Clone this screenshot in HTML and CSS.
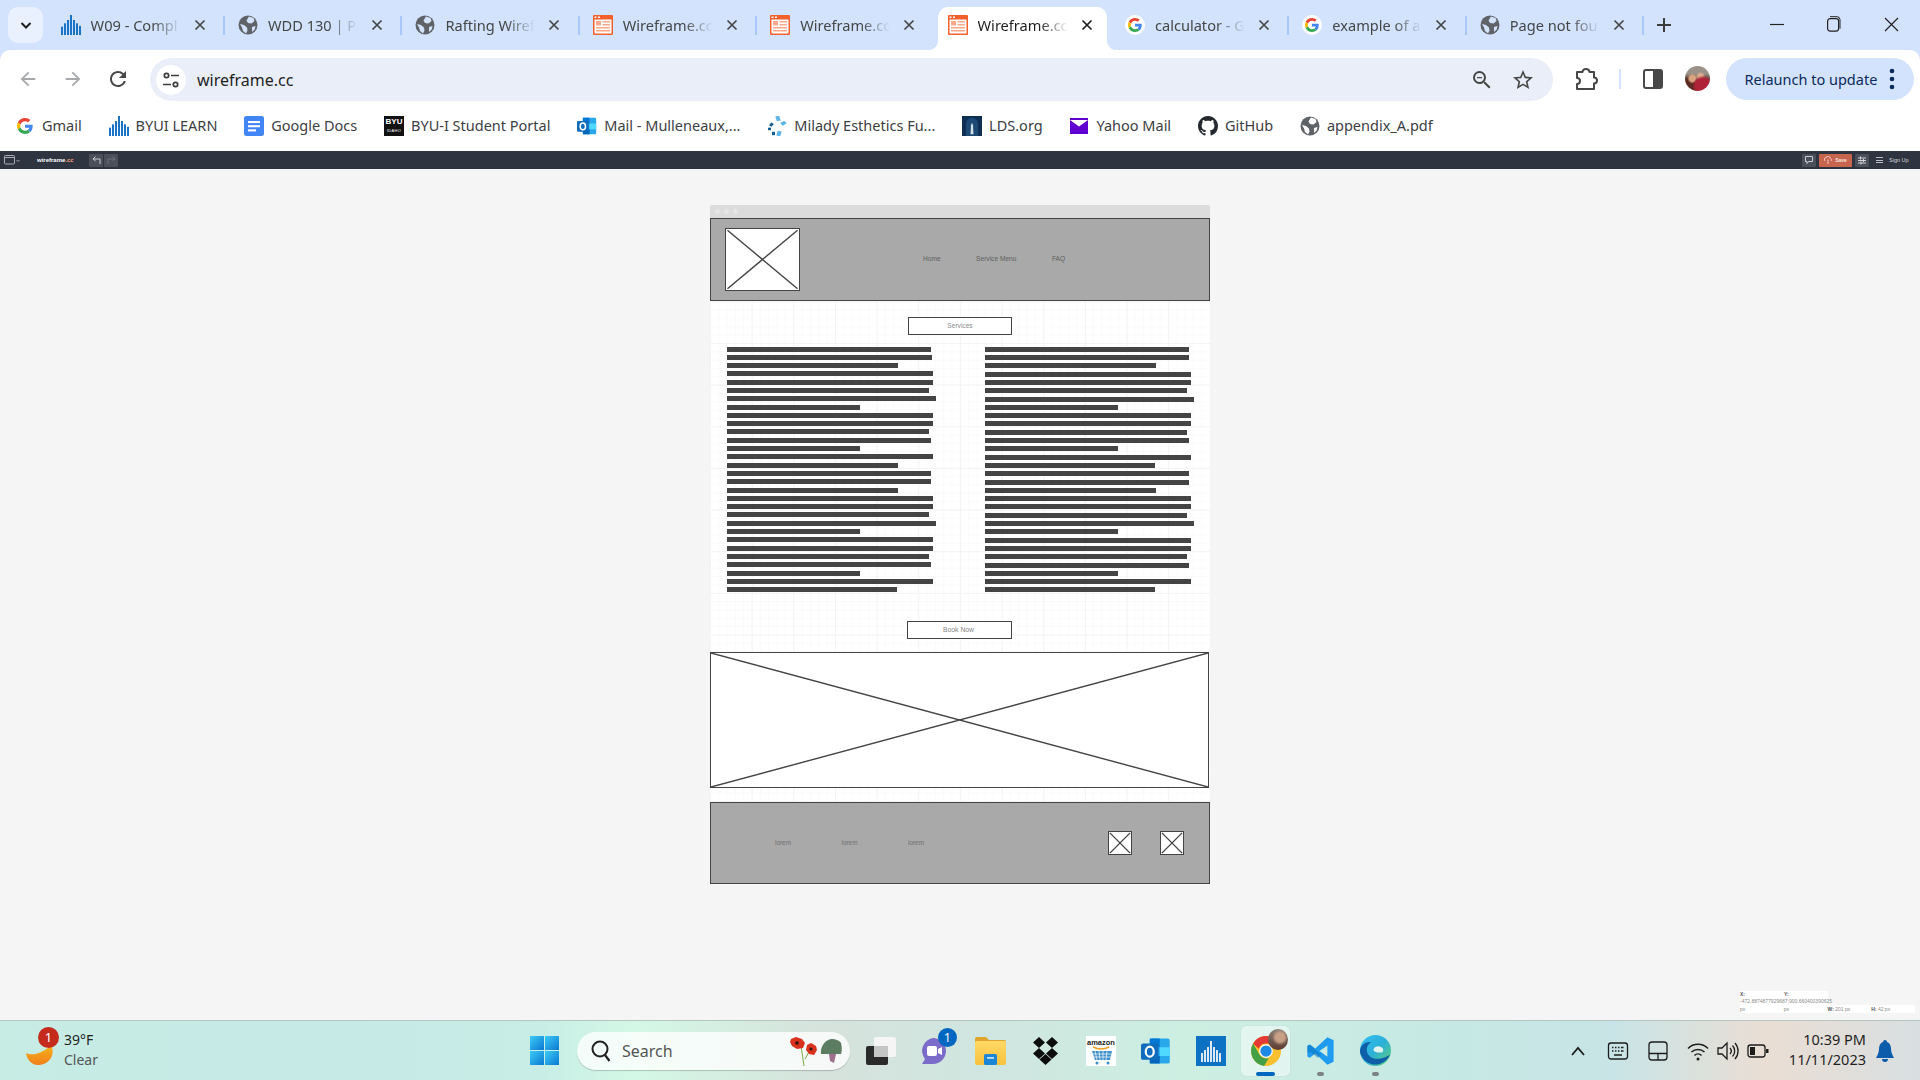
FILE: index.html
```html
<!DOCTYPE html>
<html lang="en">
<head>
  <meta charset="UTF-8">
  <meta name="viewport" content="width=device-width, initial-scale=1.0">
  <title>Wireframe.cc</title>
  <link rel="stylesheet" href="styles.css">
</head>
<body>
  <!-- shared icons -->
  <svg class="sprite" width="0" height="0">
    <defs>
      <linearGradient id="edgeGrad" x1="0" y1="0" x2="1" y2="1">
        <stop offset="0" stop-color="#35c1f1"/><stop offset="0.5" stop-color="#2bb0d8"/><stop offset="1" stop-color="#66d36e"/>
      </linearGradient>
      <linearGradient id="winGrad" x1="0" y1="0" x2="1" y2="1">
        <stop offset="0" stop-color="#3ccbf4"/><stop offset="1" stop-color="#0a78d4"/>
      </linearGradient>
      <linearGradient id="moonGrad" x1="0" y1="0" x2="0" y2="1">
        <stop offset="0" stop-color="#f9b418"/><stop offset="1" stop-color="#ef7f1a"/>
      </linearGradient>
      <linearGradient id="folderGrad" x1="0" y1="0" x2="0" y2="1">
        <stop offset="0" stop-color="#ffd966"/><stop offset="1" stop-color="#f7c23c"/>
      </linearGradient>
    </defs>
    <symbol id="i-globe" viewBox="0 0 20 20">
      <circle cx="10" cy="10" r="9.500" fill="#5f6368"/>
      <path fill="#d3e3fd" d="M11 1.500l4.500 1.500 1 3-3 2.500-3.500-.5-1.500-2.500zM2 9l4 1 3 2.500.5 3-1.500 3L5 16l-1-3.500zM14 12l3.500-1-.8 3.500-2.700 2.500z"/>
    </symbol>
    <symbol id="i-globe-w" viewBox="0 0 20 20">
      <circle cx="10" cy="10" r="9.500" fill="#5f6368"/>
      <path fill="#fff" d="M11 1.500l4.500 1.500 1 3-3 2.500-3.500-.5-1.500-2.500zM2 9l4 1 3 2.500.5 3-1.500 3L5 16l-1-3.500zM14 12l3.500-1-.8 3.500-2.700 2.500z"/>
    </symbol>
    <symbol id="i-wire" viewBox="0 0 20 20">
      <rect width="20" height="20" rx="1" fill="#f4602c"/>
      <rect x="1.500" y="4.500" width="17" height="14" fill="#fff"/>
      <rect x="1.500" y="1.500" width="2" height="1.500" fill="#fff"/>
      <rect x="5" y="1.500" width="2" height="1.500" fill="#fff"/>
      <rect x="3" y="6" width="5" height="4.500" fill="#f9a98a"/>
      <rect x="9.500" y="6" width="7.500" height="1.500" fill="#f9a98a"/>
      <rect x="9.500" y="9" width="7.500" height="1.500" fill="#f9a98a"/>
      <rect x="3" y="12" width="14" height="1.500" fill="#f9a98a"/>
      <rect x="3" y="15" width="14" height="1.500" fill="#f9a98a"/>
    </symbol>
    <symbol id="i-g" viewBox="0 0 48 48">
      <path fill="#EA4335" d="M24 9.500c3.540 0 6.710 1.220 9.210 3.600l6.850-6.850C35.900 2.380 30.470 0 24 0 14.620 0 6.510 5.380 2.560 13.220l7.980 6.190C12.430 13.720 17.740 9.500 24 9.500z"/>
      <path fill="#4285F4" d="M46.980 24.550c0-1.570-.15-3.090-.38-4.550H24v9.020h12.940c-.58 2.960-2.260 5.480-4.780 7.180l7.730 6c4.510-4.180 7.090-10.360 7.090-17.650z"/>
      <path fill="#FBBC05" d="M10.530 28.590c-.48-1.450-.76-2.990-.76-4.590s.27-3.140.76-4.590l-7.980-6.190C.92 16.460 0 20.120 0 24c0 3.880.92 7.540 2.560 10.780l7.970-6.190z"/>
      <path fill="#34A853" d="M24 48c6.480 0 11.930-2.130 15.890-5.810l-7.730-6c-2.150 1.450-4.920 2.300-8.160 2.300-6.260 0-11.570-4.220-13.470-9.910l-7.980 6.190C6.510 42.620 14.620 48 24 48z"/>
    </symbol>
    <symbol id="i-gtab" viewBox="0 0 20 20">
      <circle cx="10" cy="10" r="10" fill="#fff"/>
      <use href="#i-g" x="3" y="3" width="14" height="14"/>
    </symbol>
    <symbol id="i-byui" viewBox="0 0 20 24" preserveAspectRatio="none">
      <g fill="#1a73c4">
        <rect x="0" y="14" width="2" height="10"/><rect x="3" y="10" width="2" height="14"/>
        <rect x="6" y="6" width="2" height="18"/><rect x="9" y="0" width="2" height="24"/>
        <rect x="12" y="6" width="2" height="18"/><rect x="15" y="10" width="2" height="14"/>
        <rect x="18" y="13" width="2" height="11"/>
      </g>
    </symbol>
    <symbol id="i-docs" viewBox="0 0 20 24" preserveAspectRatio="none">
      <rect width="20" height="24" rx="2.500" fill="#4285f4"/>
      <rect x="4" y="6" width="12" height="2.500" fill="#fff"/>
      <rect x="4" y="11" width="12" height="2.500" fill="#fff"/>
      <rect x="4" y="16" width="8" height="2.500" fill="#fff"/>
    </symbol>
    <symbol id="i-outlook" viewBox="0 0 24 24">
      <rect x="7" y="2" width="16" height="20" rx="1.500" fill="#28a8ea"/>
      <rect x="7" y="2" width="8" height="7" fill="#0078d4"/>
      <rect x="15" y="9" width="8" height="7" fill="#50d9ff"/>
      <rect x="7" y="16" width="8" height="6" fill="#0364b8"/>
      <rect x="0" y="6" width="14" height="13" rx="1.500" fill="#0f6cbd"/>
      <ellipse cx="7" cy="12.500" rx="3.200" ry="4" fill="none" stroke="#fff" stroke-width="1.800"/>
    </symbol>
    <symbol id="i-x" viewBox="0 0 16 16">
      <path d="M3.500 3.500l9 9M12.500 3.500l-9 9" fill="none" stroke="currentColor" stroke-width="1.700"/>
    </symbol>
  </svg>

  <div class="browser-top">
    <div class="tabstrip">
      <button class="tab-search">
        <svg width="14" height="14" viewBox="0 0 14 14"><path d="M2.500 5l4.500 4.500L11.500 5" fill="none" stroke="#1f1f1f" stroke-width="2"/></svg>
      </button>
      <div class="tabs">
        <div class="tab"><svg class="favicon"><use href="#i-byui"/></svg><span class="tab-title">W09 - Compl</span><svg class="tab-close"><use href="#i-x"/></svg></div>
        <div class="tab"><svg class="favicon"><use href="#i-globe"/></svg><span class="tab-title">WDD 130 | Pe</span><svg class="tab-close"><use href="#i-x"/></svg></div>
        <div class="tab"><svg class="favicon"><use href="#i-globe"/></svg><span class="tab-title">Rafting Wiref</span><svg class="tab-close"><use href="#i-x"/></svg></div>
        <div class="tab"><svg class="favicon"><use href="#i-wire"/></svg><span class="tab-title">Wireframe.cc</span><svg class="tab-close"><use href="#i-x"/></svg></div>
        <div class="tab tab-nosep"><svg class="favicon"><use href="#i-wire"/></svg><span class="tab-title">Wireframe.cc</span><svg class="tab-close"><use href="#i-x"/></svg></div>
        <div class="tab tab-active"><span class="tab-bg"></span><svg class="favicon"><use href="#i-wire"/></svg><span class="tab-title">Wireframe.cc</span><svg class="tab-close"><use href="#i-x"/></svg></div>
        <div class="tab"><svg class="favicon"><use href="#i-gtab"/></svg><span class="tab-title">calculator - G</span><svg class="tab-close"><use href="#i-x"/></svg></div>
        <div class="tab"><svg class="favicon"><use href="#i-gtab"/></svg><span class="tab-title">example of a</span><svg class="tab-close"><use href="#i-x"/></svg></div>
        <div class="tab"><svg class="favicon"><use href="#i-globe"/></svg><span class="tab-title">Page not fou</span><svg class="tab-close"><use href="#i-x"/></svg></div>
      </div>
      <svg class="tab-new" width="16" height="16" viewBox="0 0 16 16"><path d="M8 1v14M1 8h14" stroke="#3c3c3c" stroke-width="2"/></svg>
      <div class="window-btns">
        <svg width="14" height="14" viewBox="0 0 14 14"><path d="M0 7.500h14" stroke="#222" stroke-width="1.200"/></svg>
        <svg width="14" height="16" viewBox="0 0 14 16"><rect x="0.600" y="2.600" width="11" height="12.500" rx="2.500" fill="none" stroke="#222" stroke-width="1.200"/><path d="M3 .7h7a3 3 0 0 1 3 3v9" fill="none" stroke="#222" stroke-width="1"/></svg>
        <svg width="15" height="15" viewBox="0 0 15 15"><path d="M1 1l13 13M14 1L1 14" stroke="#222" stroke-width="1.200"/></svg>
      </div>
    </div>

    <div class="browser-body">
      <div class="toolbar">
        <div class="nav-btn"><svg width="22" height="22" viewBox="0 0 24 24"><path fill="#a6a8ab" d="M20 11H7.830l5.590-5.590L12 4l-8 8 8 8 1.410-1.410L7.830 13H20v-2z"/></svg></div>
        <div class="nav-btn"><svg width="22" height="22" viewBox="0 0 24 24"><path fill="#a6a8ab" d="M12 4l-1.410 1.410L16.170 11H4v2h12.170l-5.580 5.590L12 20l8-8z"/></svg></div>
        <div class="nav-btn"><svg width="24" height="24" viewBox="0 0 24 24"><path fill="#474747" d="M17.650 6.350A7.958 7.958 0 0 0 12 4c-4.420 0-7.990 3.580-7.990 8s3.570 8 7.990 8c3.730 0 6.840-2.550 7.730-6h-2.080A5.990 5.990 0 0 1 12 18c-3.310 0-6-2.690-6-6s2.690-6 6-6c1.660 0 3.140.69 4.220 1.780L13 11h7V4l-2.350 2.350z"/></svg></div>
        <div class="omnibox">
          <div class="site-info">
            <svg width="18" height="18" viewBox="0 0 18 18"><g fill="none" stroke="#3c3c3c" stroke-width="1.700"><circle cx="4.500" cy="4.500" r="2.200"/><circle cx="13.500" cy="13.500" r="2.200"/><path d="M9 4.500h8M1 13.500h8"/></g></svg>
          </div>
          <span class="url">wireframe.cc</span>
          <div class="omni-btn"><svg width="24" height="24" viewBox="0 0 24 24"><path fill="#474747" d="M15.500 14h-.79l-.28-.27A6.471 6.471 0 0 0 16 9.500 6.500 6.500 0 1 0 9.500 16c1.610 0 3.090-.59 4.230-1.570l.27.28v.79l5 4.990L20.490 19l-4.990-5zm-6 0C7.010 14 5 11.990 5 9.500S7.010 5 9.500 5 14 7.010 14 9.500 11.990 14 9.500 14zM7 9h5v1.200H7z"/></svg></div>
          <div class="omni-btn"><svg width="24" height="24" viewBox="0 0 24 24"><path fill="#474747" d="M22 9.240l-7.190-.62L12 2 9.190 8.630 2 9.240l5.460 4.730L5.820 21 12 17.270 18.180 21l-1.630-7.030L22 9.240zM12 15.400l-3.760 2.270 1-4.280-3.320-2.880 4.380-.38L12 6.100l1.710 4.040 4.380.38-3.320 2.880 1 4.280L12 15.400z"/></svg></div>
        </div>
        <div class="ext-btn"><svg width="24" height="26" viewBox="0 0 24 26"><path d="M3 6h5.500a3.500 3 0 0 1 7 0H20v5.500a3 3 0 0 1 0 6V23H3v-5a3 3 0 0 0 0-6z" fill="none" stroke="#474747" stroke-width="2" stroke-linejoin="round"/></svg></div>
        <div class="tool-sep"></div>
        <div class="side-btn"><svg width="20" height="20" viewBox="0 0 20 20"><rect x="1" y="1" width="18" height="18" rx="2" fill="none" stroke="#474747" stroke-width="2"/><rect x="10" y="1" width="9" height="18" fill="#474747"/></svg></div>
        <div class="avatar"></div>
        <div class="relaunch">
          <span>Relaunch to update</span>
          <svg width="6" height="22" viewBox="0 0 6 22"><g fill="#0b2a5c"><circle cx="3" cy="3" r="2.300"/><circle cx="3" cy="11" r="2.300"/><circle cx="3" cy="19" r="2.300"/></g></svg>
        </div>
      </div>

      <div class="bookmarks">
        <a class="bm"><svg class="bm-icon bm-g"><use href="#i-g"/></svg>Gmail</a>
        <a class="bm"><svg class="bm-icon"><use href="#i-byui"/></svg>BYUI LEARN</a>
        <a class="bm"><svg class="bm-icon"><use href="#i-docs"/></svg>Google Docs</a>
        <a class="bm"><span class="bm-byu"><b>BYU</b><i>IDAHO</i></span>BYU-I Student Portal</a>
        <a class="bm"><svg class="bm-icon"><use href="#i-outlook"/></svg>Mail - Mulleneaux,...</a>
        <a class="bm"><svg class="bm-icon" viewBox="0 0 20 24" preserveAspectRatio="none"><g fill="#5bb6e6"><rect x="9" y="0" width="4" height="6" transform="rotate(-15 11 3)"/><rect x="14" y="7" width="5" height="4" transform="rotate(-35 16 9)"/><rect x="10" y="18" width="4" height="6" transform="rotate(15 12 21)"/></g><g fill="#0f5c8e"><rect x="3" y="8" width="3" height="4" transform="rotate(35 4 10)"/><rect x="1" y="14" width="3" height="3"/><rect x="5" y="19" width="3" height="4"/></g></svg>Milady Esthetics Fu...</a>
        <a class="bm"><svg class="bm-icon" viewBox="0 0 20 24" preserveAspectRatio="none"><rect width="20" height="24" fill="#0e2f53"/><path d="M4 24V9a6 7 0 0 1 12 0v15" fill="#1c4a75"/><path d="M8.500 22l.5-11 1-3 1 3 .5 11z" fill="#d5dfe8"/></svg>LDS.org</a>
        <a class="bm"><svg class="bm-icon" viewBox="0 0 20 20"><rect x="1" y="2" width="18" height="16" fill="#5f01d1"/><path d="M1 4l9 6.500L19 4" fill="#fff"/></svg>Yahoo Mail</a>
        <a class="bm"><svg class="bm-icon" viewBox="0 0 16 16"><path fill="#24292f" d="M8 0C3.580 0 0 3.580 0 8c0 3.540 2.290 6.530 5.470 7.590.4.070.55-.17.55-.38 0-.19-.01-.82-.01-1.490-2.010.37-2.530-.49-2.690-.94-.09-.23-.48-.94-.82-1.130-.28-.15-.68-.52-.01-.53.63-.01 1.080.58 1.230.82.72 1.210 1.870.87 2.330.66.07-.52.28-.87.51-1.070-1.780-.2-3.640-.89-3.640-3.950 0-.87.31-1.590.82-2.150-.08-.2-.36-1.020.08-2.120 0 0 .67-.21 2.200.82.64-.18 1.320-.27 2-.27s1.360.09 2 .27c1.530-1.040 2.200-.82 2.200-.82.44 1.100.16 1.920.08 2.120.51.56.82 1.270.82 2.150 0 3.070-1.870 3.750-3.650 3.950.29.25.54.73.54 1.480 0 1.070-.01 1.930-.01 2.200 0 .21.15.46.55.38A8.010 8.010 0 0 0 16 8c0-4.420-3.580-8-8-8z"/></svg>GitHub</a>
        <a class="bm"><svg class="bm-icon"><use href="#i-globe-w"/></svg>appendix_A.pdf</a>
      </div>
    </div>
  </div>

  <!-- wireframe.cc app bar -->
  <div class="appbar">
    <div class="appbar-group">
      <svg class="app-window" width="16" height="10" viewBox="0 0 16 10"><rect x="0.500" y="0.500" width="10" height="8.500" rx="1" fill="none" stroke="#aab" stroke-width="1"/><path d="M0.500 2.500h10" stroke="#aab"/><path d="M12.500 5l1.500 1.500L15.500 5" fill="none" stroke="#aab"/></svg>
      <span class="app-logo">wireframe<em>.cc</em></span>
      <div class="app-btns">
        <span class="app-btn"><svg width="9" height="8" viewBox="0 0 9 8"><path d="M1 3l2.500-2.500M1 3l2.500 2M1 3h7v5" fill="none" stroke="#c9ccd2"/></svg></span>
        <span class="app-btn"><svg width="9" height="8" viewBox="0 0 9 8"><path d="M8 3L5.500.5M8 3L5.500 5M8 3H1v5" fill="none" stroke="#6d727c"/></svg></span>
      </div>
    </div>
    <div class="appbar-group">
      <span class="app-btn app-comment"><svg width="8" height="8" viewBox="0 0 8 8"><path d="M.5.500h7v5h-4L2 7.500v-2H.5z" fill="none" stroke="#c9ccd2"/></svg></span>
      <span class="app-save"><svg width="8" height="8" viewBox="0 0 8 8"><path d="M1 5a2 2 0 0 1 1-3.500 2.500 2.500 0 0 1 4.500 1A1.500 1.500 0 0 1 7 5M4 3.500V8" fill="none" stroke="#f0cfc6"/></svg>Save</span>
      <span class="app-btn app-filter"><svg width="8" height="9" viewBox="0 0 8 9"><path d="M0 2h8M0 4.500h8M0 7h8M2.500 0.500v3M5.500 3v3M3 5.500v3" stroke="#d4d6da"/></svg></span>
      <span class="app-menu"><i></i><i></i><i></i></span>
      <span class="app-signup">Sign Up</span>
    </div>
  </div>

  <main class="page">
    <div class="canvas-wrap">
      <div class="canvas-top"><i></i><i></i><i></i></div>
      <div class="canvas">
        <header class="wf-header">
          <div class="wf-image wf-logo"><svg viewBox="0 0 100 100" preserveAspectRatio="none"><path d="M2 2L98 98M98 2L2 98" vector-effect="non-scaling-stroke"/></svg></div>
          <nav class="wf-nav"><span>Home</span><span>Service Menu</span><span>FAQ</span></nav>
        </header>

        <div class="wf-button wf-services">Services</div>

        <section class="wf-columns">
          <div class="wf-col wf-col-left">
            <div class="bar w204"></div><div class="bar w205"></div><div class="bar w171"></div><div class="bar w206"></div><div class="bar w206"></div>
            <div class="bar w202"></div><div class="bar w209"></div><div class="bar w133"></div><div class="bar w206"></div><div class="bar w206"></div>
            <div class="bar w202"></div><div class="bar w204"></div><div class="bar w133"></div><div class="bar w206"></div><div class="bar w171"></div>
            <div class="bar w204"></div><div class="bar w204"></div><div class="bar w171"></div><div class="bar w206"></div><div class="bar w206"></div>
            <div class="bar w202"></div><div class="bar w209"></div><div class="bar w133"></div><div class="bar w206"></div><div class="bar w206"></div>
            <div class="bar w202"></div><div class="bar w204"></div><div class="bar w133"></div><div class="bar w206"></div><div class="bar w170"></div>
          </div>
          <div class="wf-col wf-col-right">
            <div class="bar w204"></div><div class="bar w204"></div><div class="bar w171"></div><div class="bar w206"></div><div class="bar w206"></div>
            <div class="bar w202"></div><div class="bar w209"></div><div class="bar w133"></div><div class="bar w206"></div><div class="bar w206"></div>
            <div class="bar w202"></div><div class="bar w204"></div><div class="bar w133"></div><div class="bar w206"></div><div class="bar w170"></div>
            <div class="bar w204"></div><div class="bar w204"></div><div class="bar w171"></div><div class="bar w206"></div><div class="bar w206"></div>
            <div class="bar w202"></div><div class="bar w209"></div><div class="bar w133"></div><div class="bar w206"></div><div class="bar w206"></div>
            <div class="bar w202"></div><div class="bar w204"></div><div class="bar w133"></div><div class="bar w206"></div><div class="bar w170"></div>
          </div>
        </section>

        <div class="wf-button wf-book">Book Now</div>

        <div class="wf-image wf-hero"><svg viewBox="0 0 100 100" preserveAspectRatio="none"><path d="M0 0L100 100M100 0L0 100" vector-effect="non-scaling-stroke"/></svg></div>

        <footer class="wf-footer">
          <div class="wf-links"><span>lorem</span><span>lorem</span><span>lorem</span></div>
          <div class="wf-social">
            <div class="wf-image wf-icon"><svg viewBox="0 0 100 100" preserveAspectRatio="none"><path d="M4 4L96 96M96 4L4 96" vector-effect="non-scaling-stroke"/></svg></div>
            <div class="wf-image wf-icon"><svg viewBox="0 0 100 100" preserveAspectRatio="none"><path d="M4 4L96 96M96 4L4 96" vector-effect="non-scaling-stroke"/></svg></div>
          </div>
        </footer>
      </div>
    </div>

    <div class="coords">
      <div class="coords-top"><div><b>X:</b><b>Y:</b></div><div>-472.8874877929687;900.660400390625</div></div>
      <div class="coords-bottom"><span>px</span><span>px</span><span><b>W:</b> 201 px</span><span><b>H:</b> 42 px</span></div>
    </div>
  </main>

  <footer class="taskbar">
    <div class="weather">
      <svg class="moon" width="30" height="20" viewBox="0 0 30 20"><path d="M0 8c6 3 16 1 25-8 5 10-2 20-13 20C5 20 1 14 0 8z" fill="url(#moonGrad)"/></svg>
      <span class="weather-badge">1</span>
      <div class="weather-text"><span>39°F</span><span>Clear</span></div>
    </div>

    <svg class="start" width="29" height="29" viewBox="0 0 29 29">
      <rect width="14" height="14" fill="url(#winGrad)"/><rect x="15" width="14" height="14" fill="url(#winGrad)"/>
      <rect y="15" width="14" height="14" fill="url(#winGrad)"/><rect x="15" y="15" width="14" height="14" fill="url(#winGrad)"/>
    </svg>

    <div class="search">
      <svg width="20" height="22" viewBox="0 0 20 22"><circle cx="9" cy="9" r="7.500" fill="none" stroke="#222" stroke-width="2"/><path d="M14 15l4.500 6" stroke="#222" stroke-width="2.200"/></svg>
      <span>Search</span>
      <svg class="search-art" width="54" height="30" viewBox="0 0 54 30">
        <path d="M13 10l3 20M22 14l-5 9" stroke="#79a94a" fill="none"/>
        <path d="M3 3l5-2 6 2 3 4-2 5-6 1-5-3-2-4z" fill="#d8321f"/>
        <path d="M19 9l4-2 5 3 1 4-3 5-5-1-3-4z" fill="#d8321f"/>
        <circle cx="9" cy="7" r="1.800" fill="#30140f"/><circle cx="23" cy="13" r="1.500" fill="#30140f"/>
        <path d="M33 18c-1-7 4-14 10-15 5 0 9 2 10 4 1 4 1 8 0 11z" fill="#5d7d63"/>
        <path d="M41 18h7l-2 9-4-2z" fill="#a2708f"/>
      </svg>
    </div>

    <div class="task-apps">
      <div class="task-app"><svg width="30" height="28" viewBox="0 0 30 28"><rect x="8" y="0" width="22" height="20" rx="2" fill="#f4f5f4"/><rect x="0" y="9" width="22" height="19" rx="2" fill="#2a2a2a"/><rect x="8" y="9" width="14" height="11" fill="#c4c6c5"/></svg></div>
      <div class="task-app"><svg class="app-teams" width="34" height="30" viewBox="0 0 34 30"><path d="M12 2a13 13 0 0 1 13 13c0 7-6 13-13 13H1l3-5A13 13 0 0 1 12 2z" fill="#7b6cc9"/><rect x="6" y="10" width="10" height="10" rx="2" fill="#fff"/><path d="M17 13l4-2v8l-4-2z" fill="#fff"/></svg><span class="teams-badge">1</span></div>
      <div class="task-app"><svg width="31" height="28" viewBox="0 0 31 28"><path d="M0 2a2 2 0 0 1 2-2h9l3 3h15a2 2 0 0 1 2 2v2H0z" fill="#e0a52c"/><rect y="4" width="31" height="24" rx="2" fill="url(#folderGrad)"/><rect x="9" y="17" width="13" height="11" rx="1.500" fill="#1a86d4"/><rect x="12" y="20" width="7" height="1.800" fill="#bfe2f7"/></svg></div>
      <div class="task-app"><svg width="29" height="28" viewBox="0 0 29 28"><g fill="#0d0d0d"><path d="M8 0l6 5.500L8 11 2 5.500z"/><path d="M21 0l6 5.500L21 11l-6-5.500z"/><path d="M8 11l6 5.500L8 22l-6-5.500z"/><path d="M21 11l6 5.500L21 22l-6-5.500z"/><path d="M14.500 17l6 5.500-6 5.500-6-5.500z"/></g></svg></div>
      <div class="task-app"><svg width="30" height="30" viewBox="0 0 30 30"><rect width="30" height="30" fill="#fff"/><text x="15" y="9" text-anchor="middle" class="amazon-text">amazon</text><path d="M7 11q8 4 16 0" fill="none" stroke="#f39b1c" stroke-width="1.400"/><path d="M6 15h20l-2 9H9z" fill="#3d8ec9"/><path d="M9 15l2 9M13 15l1 9M17 15v9M21 15l-1 9M7 18h18M8 21h17" stroke="#fff" stroke-width=".7"/><circle cx="11" cy="27" r="1.500" fill="#3d8ec9"/><circle cx="22" cy="27" r="1.500" fill="#3d8ec9"/></svg></div>
      <div class="task-app"><svg width="30" height="30" viewBox="0 0 24 24"><use href="#i-outlook"/></svg></div>
      <div class="task-app"><svg width="30" height="30" viewBox="0 0 30 30"><rect width="30" height="30" fill="#0e72c4"/><g fill="#dbe9f5"><rect x="5" y="17" width="2" height="9"/><rect x="8" y="14" width="2" height="12"/><rect x="11" y="11" width="2" height="15"/><rect x="14" y="5" width="2" height="21"/><rect x="17" y="11" width="2" height="15"/><rect x="20" y="14" width="2" height="12"/><rect x="23" y="17" width="2" height="9"/></g></svg></div>
      <div class="task-app task-chrome">
        <svg width="30" height="30" viewBox="0 0 48 48"><circle cx="24" cy="24" r="24" fill="#fbc02d"/><path d="M24 0a24 24 0 0 1 20.800 12H24a12 12 0 0 0-11.500 8.500L3.300 12A24 24 0 0 1 24 0z" fill="#e53935"/><path d="M3.300 12l10.400 18a12 12 0 0 0 14.800 5.100L20.900 47.800A24 24 0 0 1 3.300 12z" fill="#43a047"/><circle cx="24" cy="24" r="11" fill="#fff"/><circle cx="24" cy="24" r="9" fill="#1e88e5"/></svg>
        <span class="chrome-avatar"></span>
      </div>
      <div class="task-app task-open"><svg width="31" height="30" viewBox="0 0 24 24"><path fill-rule="evenodd" fill="#1f9cf0" d="M17.500 1l-9.700 9-4.300-3.300-2 1v8.600l2 1 4.300-3.300 9.700 9 5-2.400V3.400zM17.500 7.500L11.200 12l6.300 4.500z"/><path fill="#0a6fb5" d="M1.500 7.700l2-1 9 8.300-2.600 2.400-6.400-4.800-2 1z" opacity=".5"/></svg></div>
      <div class="task-app task-open"><svg width="31" height="31" viewBox="0 0 30 30"><circle cx="15" cy="15" r="15" fill="url(#edgeGrad)"/><path d="M29 19c-3 7-11 11-18 9C4 26 0 20 0 15 1 9 6 6 11 7c-4 2-5 6-4 10 2 6 10 9 22 2z" fill="#0f5ea8"/><path d="M13 14c1-3 5-4 8-2 2 1 2 4 0 5-3 0-8 0-8-3z" fill="#dff4ee"/></svg></div>
    </div>

    <div class="tray">
      <div class="tray-icons">
        <svg width="24" height="24" viewBox="0 0 24 24"><path d="M6 16l6-7 6 7" fill="none" stroke="#1c1c1c" stroke-width="1.800"/></svg>
        <svg width="24" height="24" viewBox="0 0 24 24"><rect x="2.500" y="4" width="19" height="16" rx="2.500" fill="none" stroke="#1c1c1c" stroke-width="1.300"/><path d="M6 8.500h1.500M9 8.500h1.500M12 8.500h1.500M15 8.500h2.500M6 12h1.500M9 12h1.500M12 12h1.500M15 12h2.500M8 16h8" stroke="#1c1c1c" stroke-width="1.500"/></svg>
        <svg width="24" height="24" viewBox="0 0 24 24"><rect x="3" y="3" width="18" height="18" rx="3" fill="none" stroke="#1c1c1c" stroke-width="1.300"/><path d="M3 14.500h18M12 14.500V21" stroke="#1c1c1c" stroke-width="1.300"/></svg>
        <div class="tray-net">
          <svg width="24" height="24" viewBox="0 0 24 24"><g fill="none" stroke="#1c1c1c" stroke-width="1.500"><path d="M2 9.500a14 14 0 0 1 20 0M5.500 13a9.500 9.500 0 0 1 13 0M8.500 16.500a5 5 0 0 1 7 0"/></g><circle cx="12" cy="20" r="1.500" fill="#1c1c1c"/></svg>
          <svg width="24" height="24" viewBox="0 0 24 24"><g fill="none" stroke="#1c1c1c" stroke-width="1.300"><path d="M2 9h4l5-5v16l-5-5H2z"/><path d="M14 9a4.500 4.500 0 0 1 0 6M16.500 6.500a8 8 0 0 1 0 11M19 4a12 12 0 0 1 0 16"/></g></svg>
          <svg width="24" height="24" viewBox="0 0 24 24"><rect x="2" y="6" width="17" height="12" rx="2.500" fill="none" stroke="#1c1c1c" stroke-width="1.300"/><rect x="4" y="8" width="5" height="8" fill="#1c1c1c"/><rect x="20" y="10" width="2.500" height="4" fill="#1c1c1c"/></svg>
        </div>
      </div>
      <div class="clock"><span>10:39 PM</span><span>11/11/2023</span></div>
      <svg class="bell" width="20" height="24" viewBox="0 0 20 24"><path d="M10 1a2 2 0 0 1 2 2c3 1 4 4 4 7 0 4 2 7 3 9H1c1-2 3-5 3-9 0-3 1-6 4-7a2 2 0 0 1 2-2z" fill="#0b5cab"/><path d="M7 20h6a3 3 0 0 1-6 0z" fill="#0b5cab"/></svg>
    </div>
  </footer>
</body>
</html>
```

FILE: styles.css
```css
* {
  box-sizing: border-box;
}
body {
  margin: 0;
  width: 1920px;
  height: 1080px;
  overflow: hidden;
  display: flex;
  flex-direction: column;
  background: #f5f5f5;
  font-family: "Noto Sans", "Open Sans", sans-serif;
  color: #1f1f1f;
}
svg {
  display: block;
  flex: none;
}
.sprite {
  position: absolute;
}

/* browser chrome */
.browser-top {
  background: #d3e3fd;
}
.tabstrip {
  height: 50px;
  display: flex;
  padding-left: 8px;
}
.tab-search {
  width: 35px;
  height: 36px;
  margin-top: 7px;
  border: none;
  border-radius: 10px;
  background: #eaf1fe;
  display: flex;
  align-items: center;
  justify-content: center;
  padding: 0;
}
.tabs {
  display: flex;
  margin-left: 3.6px;
}
.tab {
  width: 177.4px;
  height: 43px;
  margin-top: 7px;
  position: relative;
  display: flex;
  align-items: center;
  padding: 0 0 7px 14px;
  color: #444746;
}
.tab::after {
  content: "";
  position: absolute;
  right: -1px;
  top: 9px;
  width: 2px;
  height: 19px;
  background: #a8c7fa;
}
.tab-nosep::after,
.tab-active::after {
  display: none;
}
.tab-bg {
  position: absolute;
  left: 4px;
  right: 4px;
  top: 0;
  bottom: 0;
  background: #fff;
  border-radius: 10px 10px 0 0;
}
.tab-bg::before,
.tab-bg::after {
  content: "";
  position: absolute;
  bottom: 0;
  width: 10px;
  height: 10px;
}
.tab-bg::before {
  left: -10px;
  background: radial-gradient(circle at 0 0, transparent 10px, #fff 10.5px);
}
.tab-bg::after {
  right: -10px;
  background: radial-gradient(circle at 100% 0, transparent 10px, #fff 10.5px);
}
.favicon {
  width: 20px;
  height: 20px;
  position: relative;
}
.tab-title {
  width: 90px;
  margin-left: 10px;
  padding-bottom: 1px;
  position: relative;
  font-size: 14.6px;
  white-space: nowrap;
  -webkit-mask-image: linear-gradient(to right, #000 68%, transparent 100%);
  mask-image: linear-gradient(to right, #000 68%, transparent 100%);
}
.tab-active .tab-title {
  color: #1f1f1f;
}
.tab-close {
  width: 16px;
  height: 16px;
  margin-left: 11px;
  position: relative;
  color: #444746;
}
.tab-active .tab-close {
  color: #1f1f1f;
}
.tab-new {
  margin: 17px 0 0 13px;
}
.window-btns {
  margin-left: auto;
  display: flex;
  align-items: center;
  height: 36px;
  padding-right: 21px;
  gap: 43px;
  margin-top: 6px;
}
.browser-body {
  background: #fff;
  border-radius: 10px 10px 0 0;
  height: 101px;
}
.toolbar {
  height: 51px;
  padding: 8px 0 0 5px;
  display: flex;
  align-items: flex-start;
}
.nav-btn {
  width: 45px;
  height: 42px;
  display: flex;
  align-items: center;
  justify-content: center;
}
.omnibox {
  width: 1403px;
  height: 43px;
  margin-left: 10px;
  border-radius: 22px;
  background: #e9eef8;
  display: flex;
  align-items: center;
  padding: 0 9.5px 0 6px;
}
.site-info {
  width: 30px;
  height: 30px;
  border-radius: 50%;
  background: #fff;
  display: flex;
  align-items: center;
  justify-content: center;
}
.url {
  margin-left: 11px;
  font-size: 16px;
  flex: 1;
  color: #1f1f1f;
}
.omni-btn {
  width: 41px;
  display: flex;
  justify-content: center;
}
.ext-btn {
  width: 66px;
  height: 42px;
  display: flex;
  align-items: center;
  justify-content: center;
}
.tool-sep {
  width: 2px;
  height: 20px;
  margin-top: 11px;
  background: #d3e3fd;
}
.side-btn {
  width: 64px;
  height: 42px;
  display: flex;
  align-items: center;
  justify-content: center;
}
.avatar {
  width: 25px;
  height: 25px;
  margin-top: 8px;
  border-radius: 50%;
  background:
    radial-gradient(circle at 72% 80%, #b02238 0 28%, transparent 40%),
    radial-gradient(circle at 30% 50%, #d9a380 0 14%, transparent 24%),
    radial-gradient(circle at 62% 42%, #dcae90 0 12%, transparent 22%),
    radial-gradient(circle at 20% 85%, #5a2a22 0 25%, transparent 40%),
    linear-gradient(#9a9189 0 30%, #4e3026 60%);
}
.relaunch {
  width: 188px;
  height: 42px;
  margin-left: 15.5px;
  border-radius: 21px;
  background: #d3e3fd;
  display: flex;
  align-items: center;
  justify-content: space-between;
  padding: 0 19px;
  font-size: 14.5px;
  color: #0b2a5c;
}
.bookmarks {
  height: 50px;
  display: flex;
  align-items: center;
  gap: 26.8px;
  padding: 0 0 2px 17px;
  font-size: 14.5px;
  color: #3c4043;
}
.bm {
  display: flex;
  align-items: center;
  gap: 7px;
  white-space: nowrap;
}
.bm-icon {
  width: 20px;
  height: 20px;
  margin-top: 2px;
}
.bm-g {
  width: 16px;
  height: 16px;
  margin-right: 2px;
}
.bm-byu {
  width: 20px;
  height: 20px;
  margin-top: 2px;
  background: #111;
  color: #fff;
  display: flex;
  flex-direction: column;
  align-items: center;
  font-family: "Liberation Sans", sans-serif;
  line-height: 1;
}
.bm-byu b {
  font-size: 8px;
  margin-top: 2px;
}
.bm-byu i {
  font-size: 4px;
  font-style: normal;
  margin-top: 3px;
  letter-spacing: .3px;
}

/* wireframe.cc bar */
.appbar {
  height: 18px;
  background: #2e3440;
  display: flex;
  justify-content: space-between;
  font-family: "Liberation Sans", sans-serif;
}
.appbar-group {
  display: flex;
  align-items: center;
}
.app-window {
  margin-left: 4px;
}
.app-logo {
  margin-left: 17px;
  font-size: 6px;
  font-weight: bold;
  color: #fff;
  width: 52px;
}
.app-logo em {
  font-style: normal;
  color: #f6a37f;
}
.app-btns {
  display: flex;
  gap: 1px;
}
.app-btn {
  width: 14px;
  height: 13px;
  background: #4a4f5a;
  border-radius: 1px;
  display: flex;
  align-items: center;
  justify-content: center;
}
.app-save {
  width: 33px;
  height: 13px;
  margin-left: 3px;
  background: #c8654f;
  border-radius: 1px;
  display: flex;
  align-items: center;
  justify-content: center;
  gap: 3px;
  color: #f8e3dd;
  font-size: 5px;
  font-weight: bold;
}
.app-filter {
  margin-left: 3px;
}
.app-menu {
  width: 7px;
  margin-left: 6.5px;
  display: flex;
  flex-direction: column;
  gap: 1.5px;
}
.app-menu i {
  height: 1px;
  background: #b9bcc2;
}
.app-signup {
  width: 31px;
  margin-left: 6.5px;
  font-size: 5.5px;
  color: #d5d8dc;
}

/* page */
.page {
  flex: 1;
  position: relative;
  padding-top: 36px;
}
.canvas-wrap {
  width: 500px;
  margin: 0 auto;
}
.canvas-top {
  height: 13px;
  background: #dcdcdc;
  border-radius: 2px 2px 0 0;
  display: flex;
  align-items: center;
  gap: 4px;
  padding-left: 5px;
}
.canvas-top i {
  width: 5px;
  height: 5px;
  border-radius: 50%;
  background: #e6e6e6;
}
.canvas {
  height: 667px;
  background-color: #fff;
  background-image:
    linear-gradient(to right, #f4f4f4 1px, transparent 1px),
    linear-gradient(to bottom, #f4f4f4 1px, transparent 1px),
    linear-gradient(to right, #fafafa 1px, transparent 1px),
    linear-gradient(to bottom, #fafafa 1px, transparent 1px);
  background-size: 41.67px 41.67px, 41.67px 41.67px, 8.33px 8.33px, 8.33px 8.33px;
}
.wf-header {
  height: 83px;
  border: 1px solid #444;
  background: #a9a9a9;
  display: flex;
  align-items: center;
  padding-left: 13.5px;
}
.wf-image {
  background: #fff;
  border: 1px solid #444;
}
.wf-image svg {
  width: 100%;
  height: 100%;
}
.wf-image path {
  stroke: #444;
  stroke-width: 1.4;
  fill: none;
}
.wf-logo {
  width: 75px;
  height: 63px;
}
.wf-nav {
  display: flex;
  margin: 0 0 2px 123.5px;
  gap: 35.5px;
  font-family: "Liberation Sans", sans-serif;
  font-size: 6.6px;
  color: #5f5f5f;
}
.wf-button {
  height: 18px;
  padding-bottom: 1px;
  border: 1px solid #444;
  background: #fff;
  display: flex;
  align-items: center;
  justify-content: center;
  font-family: "Liberation Sans", sans-serif;
  font-size: 6.6px;
  color: #8c8c8c;
}
.wf-services {
  width: 104px;
  margin: 16px auto 0;
}
.wf-columns {
  display: flex;
  padding-left: 17px;
  margin-top: 11px;
}
.wf-col {
  width: 258px;
  flex: none;
  display: flex;
  flex-direction: column;
  gap: 3.31px;
}
.wf-col-left {
  padding-top: .5px;
}
.wf-col-right {
  padding-top: .8px;
}
.bar {
  height: 5px;
  background: #444;
}
.w133 { width: 133px; }
.w170 { width: 170px; }
.w171 { width: 171px; }
.w202 { width: 202px; }
.w204 { width: 204px; }
.w205 { width: 205px; }
.w206 { width: 206px; }
.w209 { width: 209px; }
.wf-book {
  width: 105px;
  margin: 28.5px 0 0 197px;
  padding-right: 2px;
  font-size: 6.8px;
  color: #858585;
}
.wf-hero {
  width: 499px;
  height: 136px;
  margin-top: 13px;
}
.wf-footer {
  height: 82px;
  margin-top: 14px;
  border: 1px solid #444;
  background: #a9a9a9;
  display: flex;
  align-items: center;
  justify-content: space-between;
  padding: 0 25px 0 64px;
}
.wf-links {
  display: flex;
  gap: 50.5px;
  font-family: "Liberation Sans", sans-serif;
  font-size: 6.4px;
  color: #707070;
}
.wf-social {
  display: flex;
  gap: 28px;
}
.wf-icon {
  width: 24px;
  height: 24px;
}
.coords {
  position: absolute;
  left: 1740px;
  top: 822px;
  font-family: "Liberation Sans", sans-serif;
  font-size: 5px;
  color: #8a8a8a;
}
.coords b {
  color: #555;
}
.coords-top {
  width: 88px;
  height: 14px;
  background: #fff;
  line-height: 6.5px;
  white-space: nowrap;
}
.coords-top b {
  display: inline-block;
  width: 44px;
}
.coords-bottom {
  width: 175px;
  height: 8px;
  display: flex;
  background: #fff;
  line-height: 8px;
}
.coords-bottom span {
  width: 44px;
}

/* windows taskbar */
.taskbar {
  height: 60px;
  border-top: 1px solid #b4c4bf;
  background: linear-gradient(90deg, #c6ece4 0%, #c6ebe7 17%, #c7ede6 28%, #d4f8e6 33%, #d6e2dc 43%, #cfe6e0 52%, #cdefe2 62%, #c6e8e4 76%, #c8e4e6 84%, #eaded4 92%, #d8dfe1 100%);
  display: flex;
  align-items: center;
}
.weather {
  width: 530px;
  height: 100%;
  position: relative;
  display: flex;
  padding: 0 0 2px 64px;
  align-items: center;
}
.moon {
  position: absolute;
  left: 26px;
  top: 24px;
}
.weather-badge {
  position: absolute;
  left: 38px;
  top: 6px;
  width: 21px;
  height: 21px;
  border-radius: 50%;
  background: #c42b1c;
  color: #fff;
  font-size: 13px;
  line-height: 21px;
  text-align: center;
}
.weather-text {
  display: flex;
  flex-direction: column;
  font-size: 14px;
  line-height: 20px;
}
.weather-text span:last-child {
  color: #555;
}
.search {
  width: 273px;
  height: 38px;
  margin-left: 18px;
  border-radius: 19px;
  background: rgba(255, 255, 255, .78);
  box-shadow: 0 1px 1px rgba(0, 0, 0, .2);
  display: flex;
  align-items: center;
  padding-left: 14px;
  font-size: 16px;
  color: #555;
}
.search span {
  margin-left: 11px;
  flex: 1;
}
.search-art {
  margin-right: 8px;
}
.task-apps {
  display: flex;
  margin-left: 3px;
}
.task-app {
  width: 55px;
  height: 60px;
  position: relative;
  display: flex;
  align-items: center;
  justify-content: center;
}
.amazon-text {
  font-family: "Liberation Sans", sans-serif;
  font-size: 7.5px;
  font-weight: bold;
  fill: #222;
}
.app-teams {
  margin-left: 4px;
}
.teams-badge {
  position: absolute;
  left: 30px;
  top: 7px;
  width: 19px;
  height: 19px;
  border-radius: 50%;
  background: #0067c0;
  color: #fff;
  font-size: 12px;
  line-height: 19px;
  text-align: center;
}
.task-chrome::before {
  content: "";
  position: absolute;
  left: 3px;
  right: 3px;
  top: 5px;
  bottom: 5px;
  border-radius: 5px;
  background: rgba(255, 255, 255, .45);
  box-shadow: 0 0 1px rgba(0, 0, 0, .2);
}
.task-chrome svg {
  position: relative;
}
.task-chrome::after {
  content: "";
  position: absolute;
  left: 18px;
  bottom: 5px;
  width: 19px;
  height: 4px;
  border-radius: 2px;
  background: #0067c0;
}
.chrome-avatar {
  position: absolute;
  left: 30px;
  top: 8px;
  width: 20px;
  height: 21px;
  border-radius: 50%;
  background:
    radial-gradient(circle at 60% 40%, #c9a086 0 25%, transparent 45%),
    linear-gradient(#8c8379, #5c3a30);
}
.task-open::after {
  content: "";
  position: absolute;
  left: 24px;
  bottom: 5px;
  width: 7px;
  height: 4px;
  border-radius: 2px;
  background: #7b8384;
}
.tray {
  margin-left: auto;
  padding-right: 23px;
  display: flex;
  align-items: center;
}
.tray-icons {
  display: flex;
  align-items: center;
  gap: 16px;
}
.tray-net {
  display: flex;
  gap: 6px;
}
.clock {
  width: 90px;
  margin-left: 6px;
  padding-bottom: 4px;
  display: flex;
  flex-direction: column;
  align-items: flex-end;
  font-size: 14.5px;
  line-height: 20px;
}
.bell {
  margin-left: 9px;
  margin-right: 2px;
}
```
